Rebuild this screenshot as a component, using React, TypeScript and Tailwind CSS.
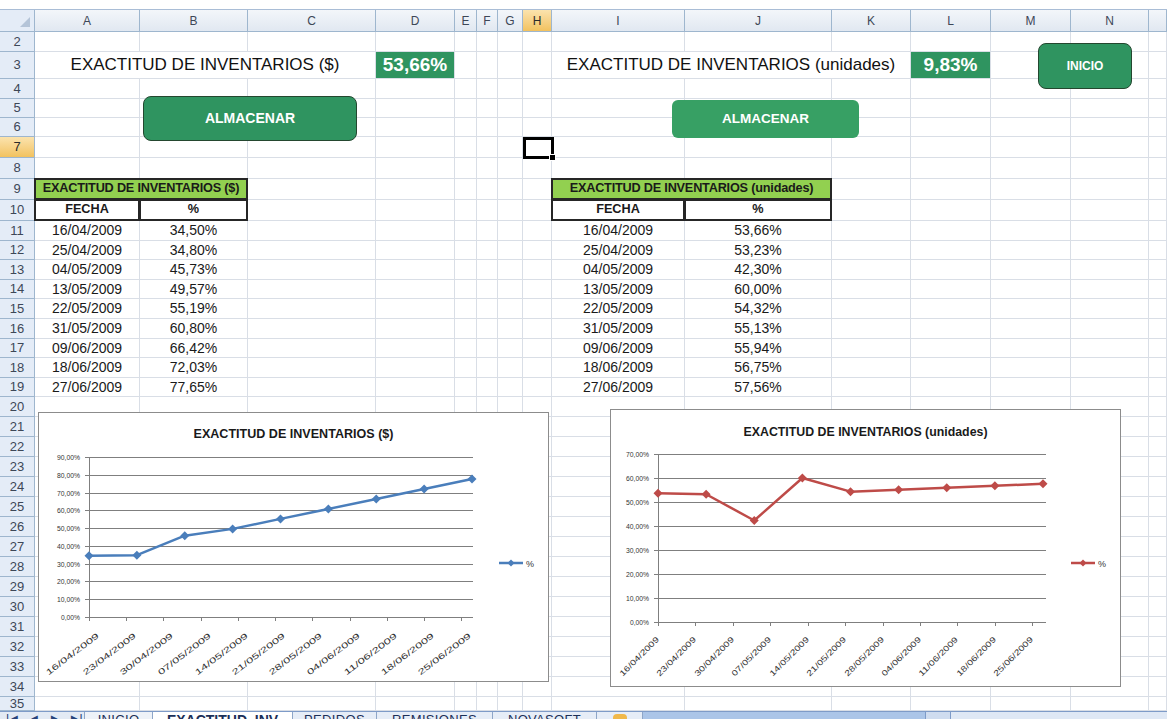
import React from "react";

// hoja de Excel: exactitud de inventarios en $ y en unidades
const COLS = ["A", "B", "C", "D", "E", "F", "G", "H", "I", "J", "K", "L", "M", "N", ""];
const ROWS = Array.from({ length: 34 }, (_, i) => i + 2);

const FECHAS = [
  "16/04/2009",
  "25/04/2009",
  "04/05/2009",
  "13/05/2009",
  "22/05/2009",
  "31/05/2009",
  "09/06/2009",
  "18/06/2009",
  "27/06/2009",
];
const PESOS = [34.5, 34.8, 45.73, 49.57, 55.19, 60.8, 66.42, 72.03, 77.65];
const UNIDADES = [53.66, 53.23, 42.3, 60.0, 54.32, 55.13, 55.94, 56.75, 57.56];

// dias desde el 16/04 para cada medicion, y etiquetas semanales del eje
const DIAS = [0, 9, 18, 27, 36, 45, 54, 63, 72];
const TICKS = [
  "16/04/2009",
  "23/04/2009",
  "30/04/2009",
  "07/05/2009",
  "14/05/2009",
  "21/05/2009",
  "28/05/2009",
  "04/06/2009",
  "11/06/2009",
  "18/06/2009",
  "25/06/2009",
];

const pct = (v: number) => v.toFixed(2).replace(".", ",") + "%";

type Cell = { span?: string; cls?: string; text?: string; framed?: boolean };

const blank = (n: number): Cell[] => Array.from({ length: n }, () => ({}));

const green = "justify-center bg-[#2f9460] text-white font-bold text-[19px]";
const head = "justify-center bg-[#92d050] font-bold text-[12.7px] tracking-[-0.2px]";

function rowCells(r: number): Cell[] {
  if (r === 3)
    return [
      { span: "col-span-3", cls: "justify-center text-[17px] text-[#111]", text: "EXACTITUD DE INVENTARIOS ($)" },
      { cls: green, text: "53,66%" },
      ...blank(4),
      { span: "col-span-3", cls: "justify-center text-[17px] text-[#111]", text: "EXACTITUD DE INVENTARIOS (unidades)" },
      { cls: green, text: "9,83%" },
      ...blank(3),
    ];
  if (r === 9)
    return [
      { span: "col-span-2", cls: head, text: "EXACTITUD DE INVENTARIOS ($)", framed: true },
      ...blank(6),
      { span: "col-span-2", cls: head, text: "EXACTITUD DE INVENTARIOS (unidades)", framed: true },
      ...blank(5),
    ];
  if (r === 10)
    return [
      { cls: "justify-center font-bold text-[12.7px]", text: "FECHA", framed: true },
      { cls: "justify-center font-bold text-[12.7px]", text: "%", framed: true },
      ...blank(6),
      { cls: "justify-center font-bold text-[12.7px]", text: "FECHA", framed: true },
      { cls: "justify-center font-bold text-[12.7px]", text: "%", framed: true },
      ...blank(5),
    ];
  if (r >= 11 && r <= 19) {
    const i = r - 11;
    return [
      { cls: "justify-center text-[14px]", text: FECHAS[i] },
      { cls: "justify-center text-[14px]", text: pct(PESOS[i]) },
      ...blank(6),
      { cls: "justify-center text-[14px]", text: FECHAS[i] },
      { cls: "justify-center text-[14px]", text: pct(UNIDADES[i]) },
      ...blank(5),
    ];
  }
  return blank(15);
}

const gridLine = "border-r border-b border-[#d9dee6]";

function SheetRow({ r }: { r: number }) {
  return (
    <>
      <div
        className={`flex items-center justify-center border-r border-b border-[#9eb6ce] text-[13px] ${
          r === 7 ? "bg-linear-to-b from-[#fbe3ad] to-[#f2c25e] text-[#2b2b2b]" : "bg-[#e4ecf7] text-[#3d4757]"
        }`}
      >
        {r}
      </div>
      {rowCells(r).map((c, i) => (
        <div
          key={i}
          className={`flex items-center overflow-hidden whitespace-nowrap ${c.span ?? ""} ${
            c.framed ? "-mt-px -ml-px border-2 border-[#262626]" : gridLine
          } ${c.cls ?? ""}`}
        >
          {c.text}
        </div>
      ))}
    </>
  );
}

function HeaderRow() {
  return (
    <>
      <div className="relative border-r border-b border-[#9eb6ce] bg-[#e4ecf7]">
        <svg width="12" height="12" className="absolute right-[3px] bottom-[3px]">
          <path d="M11 1 L11 11 L1 11 Z" fill="#b4c4d8" />
        </svg>
      </div>
      {COLS.map((c, i) => (
        <div
          key={i}
          className={`flex items-center justify-center border-r border-b border-[#9eb6ce] text-[12px] ${
            c === "H"
              ? "bg-linear-to-b from-[#fbe3ad] to-[#f2c25e] text-[#2b2b2b]"
              : "bg-linear-to-b from-[#f3f6fa] to-[#e1e8f1] text-[#3d4757]"
          }`}
        >
          {c}
        </div>
      ))}
    </>
  );
}

type ChartCfg = {
  title: string;
  titleW: number;
  titleY: number;
  w: number;
  h: number;
  x0: number;
  x1: number;
  plotR: number;
  yTop: number;
  yBot: number;
  max: number;
  labelR: number;
  values: number[];
  color: string;
  angle: number;
  llen: number;
  ldx: number;
  ldy: number;
  legendY: number;
};

function Diamond({ x, y, r, color }: { x: number; y: number; r: number; color: string }) {
  return <polygon points={`${x},${y - r} ${x + r},${y} ${x},${y + r} ${x - r},${y}`} fill={color} />;
}

function LineChart({ c }: { c: ChartCfg }) {
  const yOf = (v: number) => c.yBot - (v / c.max) * (c.yBot - c.yTop);
  const xOf = (d: number) => c.x0 + (d / 72) * (c.x1 - c.x0);
  const pts = c.values.map((v, i) => [xOf(DIAS[i]), yOf(v)] as const);
  const grid = Array.from({ length: c.max / 10 + 1 }, (_, i) => i * 10);
  const axis = "#7f7f7f";

  return (
    <svg width={c.w} height={c.h} className="block" fontFamily="'Liberation Sans', Arial, sans-serif">
      <text
        x={c.w / 2}
        y={c.titleY}
        textAnchor="middle"
        fontSize={13}
        fontWeight={700}
        textLength={c.titleW}
        lengthAdjust="spacingAndGlyphs"
        fill="#1a1a1a"
      >
        {c.title}
      </text>

      {grid.map((v) => {
        const y = Math.round(yOf(v)) + 0.5;
        return (
          <g key={v}>
            <line x1={c.x0 - 4} x2={c.plotR} y1={y} y2={y} stroke={axis} />
            <text
              x={c.labelR}
              y={y + 2.5}
              textAnchor="end"
              fontSize={7}
              textLength={v === 0 ? 19 : 23}
              lengthAdjust="spacingAndGlyphs"
              fill="#333"
            >
              {v},00%
            </text>
          </g>
        );
      })}
      <line x1={c.x0 + 0.5} x2={c.x0 + 0.5} y1={c.yTop} y2={c.yBot} stroke={axis} />

      {TICKS.map((t, i) => {
        const x = Math.round(xOf(i * 7)) + 0.5;
        const ax = x + c.ldx;
        const ay = c.yBot + c.ldy;
        return (
          <g key={t}>
            <line x1={x} x2={x} y1={c.yBot} y2={c.yBot + 4} stroke={axis} />
            <text
              x={ax}
              y={ay}
              textAnchor="end"
              fontSize={8}
              textLength={c.llen}
              lengthAdjust="spacingAndGlyphs"
              transform={`rotate(-${c.angle} ${ax} ${ay})`}
              fill="#333"
            >
              {t}
            </text>
          </g>
        );
      })}

      <polyline
        points={pts.map((p) => p.join(",")).join(" ")}
        fill="none"
        stroke={c.color}
        strokeWidth={2.5}
        strokeLinejoin="round"
      />
      {pts.map(([x, y], i) => (
        <Diamond key={i} x={x} y={y} r={4.5} color={c.color} />
      ))}

      {/* leyenda */}
      <line x1={460} x2={484} y1={c.legendY} y2={c.legendY} stroke={c.color} strokeWidth={2.5} />
      <Diamond x={472} y={c.legendY} r={3.5} color={c.color} />
      <text x={487} y={c.legendY + 3.5} fontSize={9} fill="#333">
        %
      </text>
    </svg>
  );
}

const chartPesos: ChartCfg = {
  title: "EXACTITUD DE INVENTARIOS ($)",
  titleW: 200,
  titleY: 25,
  w: 509,
  h: 268,
  x0: 50,
  x1: 433,
  plotR: 434,
  yTop: 44,
  yBot: 204,
  max: 90,
  labelR: 41,
  values: PESOS,
  color: "#4a7ebb",
  angle: 37,
  llen: 64,
  ldx: 10,
  ldy: 20,
  legendY: 150,
};

const chartUnidades: ChartCfg = {
  title: "EXACTITUD DE INVENTARIOS (unidades)",
  titleW: 244,
  titleY: 26,
  w: 509,
  h: 276,
  x0: 47,
  x1: 432,
  plotR: 435,
  yTop: 44,
  yBot: 212,
  max: 70,
  labelR: 38,
  values: UNIDADES,
  color: "#be4b48",
  angle: 45,
  llen: 52,
  ldx: 1,
  ldy: 18,
  legendY: 153,
};

function SheetTabs() {
  const tab = "flex items-start justify-center pt-px leading-none text-[13px] border-r border-[#8ea6c8]";
  return (
    <div className="flex h-[24px] border-t border-[#7e9bc8] bg-[#abc5e8] text-[#1b2f57]">
      <div className="flex w-[85px] items-start gap-[9px] border-r border-[#8ea6c8] bg-[#e3eaf4] pt-px pl-[6px] text-[11px] leading-none text-[#27437a]">
        <span>I◄</span>
        <span>◄</span>
        <span>►</span>
        <span>►I</span>
      </div>
      <div className={`${tab} w-[68px] bg-[#eef2f8] tracking-wide`}>INICIO</div>
      <div className={`${tab} w-[140px] bg-white text-[14px] font-bold`}>EXACTITUD_INV</div>
      <div className={`${tab} w-[84px] bg-[#e6edf7] tracking-wide`}>PEDIDOS</div>
      <div className={`${tab} w-[116px] bg-[#e6edf7] tracking-wide`}>REMISIONES</div>
      <div className={`${tab} w-[104px] bg-[#e6edf7] tracking-wide`}>NOVASOFT</div>
      <div className={`${tab} w-[46px] bg-[#e6edf7]`}>
        <span className="mt-[1px] h-[12px] w-[14px] rounded-sm bg-[#f0b84a]" />
      </div>
      <div className="w-[282px]" />
      <div className="w-[26px] border-x border-[#7e9bc8] bg-[#cfdcef]" />
      <div className="flex-1 bg-[#dfe8f5]" />
    </div>
  );
}

export default function App() {
  return (
    <div className="h-[719px] w-[1167px] overflow-hidden bg-white font-['Liberation_Sans',Arial,sans-serif] text-[#1a1a1a]">
      <div className="h-[10px] border-b border-[#a9bdd6] bg-white" />

      <div className="relative h-[701px] overflow-hidden">
        <div className="grid grid-cols-[35px_105px_108px_128px_79px_22px_21px_25px_29px_133px_147px_79px_80px_80px_78px_18px] grid-rows-[22px_20px_27px_20px_19px_19px_21px_21px_21px_21px_20px_19px_20px_19px_20px_20px_19px_20px_19px_repeat(15,20px)_14px]">
          <HeaderRow />
          {ROWS.map((r) => (
            <SheetRow key={r} r={r} />
          ))}
        </div>

        {/* botones de macro */}
        <button className="absolute top-[33px] left-[1038px] h-[46px] w-[94px] rounded-lg border-[1.5px] border-[#24472f] bg-[#2f9460] text-[12px] font-bold text-white">
          INICIO
        </button>
        <button className="absolute top-[86px] left-[143px] h-[45px] w-[214px] rounded-lg border-[1.5px] border-[#24472f] bg-[#2f9460] text-[14px] font-bold text-white">
          ALMACENAR
        </button>
        <button className="absolute top-[90px] left-[672px] h-[38px] w-[187px] rounded-md bg-[#37a064] text-[13.5px] font-bold text-white">
          ALMACENAR
        </button>

        {/* celda activa H7 */}
        <div className="absolute top-[127px] left-[523px] h-[22px] w-[31px] border-[3px] border-black">
          <div className="absolute -right-[5px] -bottom-[5px] h-[7px] w-[7px] border border-white bg-black" />
        </div>

        <div className="absolute top-[402px] left-[38px] border border-[#8c8c8c] bg-white">
          <LineChart c={chartPesos} />
        </div>
        <div className="absolute top-[399px] left-[610px] border border-[#8c8c8c] bg-white">
          <LineChart c={chartUnidades} />
        </div>
      </div>

      <SheetTabs />
    </div>
  );
}
